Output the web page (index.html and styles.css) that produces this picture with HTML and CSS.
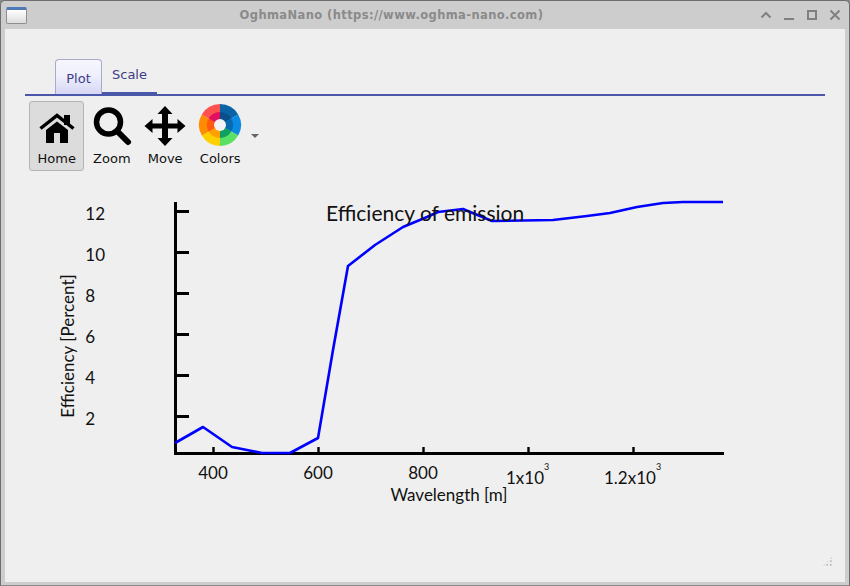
FILE: index.html
```html
<!DOCTYPE html>
<html lang="en">
<head>
<meta charset="utf-8">
<title>OghmaNano</title>
<link rel="stylesheet" href="styles.css">
</head>
<body>
<div class="window">
  <header class="titlebar">
    <div class="app-icon"></div>
    <div class="title">OghmaNano (https://www.oghma-nano.com)</div>
    <div class="win-buttons">
      <svg class="win-btn" viewBox="0 0 12 12"><path d="M1.5 8.5 6 4l4.500 4.500" /></svg>
      <svg class="win-btn" viewBox="0 0 12 12"><path d="M1 10h10" /></svg>
      <svg class="win-btn" viewBox="0 0 12 12"><path d="M2 2h8v8H2z" /></svg>
      <svg class="win-btn" viewBox="0 0 12 12"><path d="m1.500 1.500 9 9m0-9-9 9" /></svg>
    </div>
  </header>
  <main class="content">
    <nav class="tabs">
      <div class="tab tab-active">Plot</div>
      <div class="tab tab-idle">Scale</div>
    </nav>
    <div class="toolbar">
      <div class="tool tool-active">
        <svg class="tool-icon" viewBox="0 0 48 48">
          <path d="M31 12h6v10h-6z"/>
          <path d="M7.500 25.500 24 12.500l16.500 13" class="roof"/>
          <path d="M13 27 24 18.500 35 27v13H27V30h-6v10h-8z"/>
        </svg>
        <span>Home</span>
      </div>
      <div class="tool">
        <svg class="tool-icon" viewBox="0 0 48 48">
          <circle cx="20.500" cy="19" r="12" class="lens"/>
          <path d="m29 28 11 11" class="handle"/>
        </svg>
        <span>Zoom</span>
      </div>
      <div class="tool">
        <svg class="tool-icon" viewBox="0 0 48 48">
          <path d="M24 3l7.500 8H27v9.500h9.500V16l8 7-8 7v-4.500H27V35h4.500L24 43l-7.500-8H21v-9.500h-9.500V30l-8-7 8-7v4.500H21V11h-4.500z"/>
        </svg>
        <span>Move</span>
      </div>
      <div class="tool">
        <svg class="tool-icon" viewBox="0 0 48 48">
          <path fill="#0a63a5" d="M24 1a21 21 0 0 1 18.190 10.500L24 22z"/>
          <path fill="#0a8ae0" d="M42.190 11.500a21 21 0 0 1 0 21L24 22z"/>
          <path fill="#5be066" d="M42.190 32.500A21 21 0 0 1 24 43V22z"/>
          <path fill="#ffd000" d="M24 43a21 21 0 0 1-18.190-10.500L24 22z"/>
          <path fill="#ff8c00" d="M5.810 32.500a21 21 0 0 1 0-21L24 22z"/>
          <path fill="#ff5050" d="M5.810 11.500A21 21 0 0 1 24 1v21z"/>
          <path fill="#0a4f8a" d="M24 9a13 13 0 0 1 11.260 6.500L24 22z"/>
          <path fill="#0a6ab0" d="M35.260 15.500a13 13 0 0 1 0 13L24 22z"/>
          <path fill="#10a060" d="M35.260 28.500A13 13 0 0 1 24 35V22z"/>
          <path fill="#ffa000" d="M24 35a13 13 0 0 1-11.260-6.500L24 22z"/>
          <path fill="#ff5a10" d="M12.740 28.500a13 13 0 0 1 0-13L24 22z"/>
          <path fill="#e01060" d="M12.740 15.500A13 13 0 0 1 24 9v13z"/>
          <circle cx="24" cy="22" r="6" fill="#f4f4f4"/>
        </svg>
        <span>Colors</span>
      </div>
      <div class="caret"></div>
    </div>
    <svg class="plot" viewBox="5 172 840 400">
      <path class="axis" d="M175.500 202v253M174 453.500h550"/>
      <path class="axis" d="M175 211.500h14M175 252.500h14M175 293.500h14M175 334.500h14M175 375.500h14M175 416.500h14"/>
      <path class="xtick" d="M213.500 447v6M318.500 447v6M423.500 447v6M528.500 447v6M633.500 447v6"/>
      <path class="curve" d="M175 443 203 427 232 447 247 450 262 453 290 453 318 438 333 350 348 266 375 245 403 227 427 217 438 212 463 209 492 221 553 220 587 216 610 213 637 207 663 203 683 202 723 202"/>
      <text class="t-title" x="326" y="221">Efficiency of emission</text>
      <text class="t-tick" x="105" y="220" text-anchor="end">12</text>
      <text class="t-tick" x="105" y="261" text-anchor="end">10</text>
      <text class="t-tick" x="95" y="302" text-anchor="end">8</text>
      <text class="t-tick" x="95" y="343" text-anchor="end">6</text>
      <text class="t-tick" x="95" y="384" text-anchor="end">4</text>
      <text class="t-tick" x="95" y="425" text-anchor="end">2</text>
      <text class="t-tick" x="213" y="479" text-anchor="middle">400</text>
      <text class="t-tick" x="318" y="479" text-anchor="middle">600</text>
      <text class="t-tick" x="423" y="479" text-anchor="middle">800</text>
      <text class="t-tick" x="506" y="483.500">1x10</text>
      <text class="t-sup" x="544" y="469.500">3</text>
      <text class="t-tick" x="604" y="483.500">1.2x10</text>
      <text class="t-sup" x="656" y="469.500">3</text>
      <text class="t-label" x="449" y="501" text-anchor="middle">Wavelength [m]</text>
      <text class="t-label" transform="translate(74 346) rotate(-90)" text-anchor="middle">Efficiency [Percent]</text>
    </svg>
    <div class="grip"></div>
  </main>
</div>
</body>
</html>
```
FILE: styles.css
```css
html, body {
  margin: 0;
  padding: 0;
  width: 850px;
  height: 586px;
  overflow: hidden;
  background: #8a8a8a;
}
.window {
  box-sizing: border-box;
  width: 850px;
  height: 586px;
  display: flex;
  flex-direction: column;
  background: #cdcdcd;
  border: 1px solid #6e6e6e;
  border-bottom-color: #8a8a8a;
  border-radius: 5px 5px 0 0;
  padding: 0 4px 3px 4px;
  font-family: "DejaVu Sans", sans-serif;
}
.titlebar {
  height: 28px;
  flex: none;
  display: flex;
  align-items: center;
}
.app-icon {
  box-sizing: border-box;
  width: 21px;
  height: 17px;
  margin-left: 1px;
  border: 1px solid #8f8f8f;
  border-top: 3px solid #4e78b8;
  border-radius: 2px;
  background: linear-gradient(#ffffff, #dcdcdc);
}
.title {
  flex: 1;
  text-align: center;
  padding-right: 4px;
  font-size: 11.500px;
  font-weight: bold;
  letter-spacing: 0.4px;
  color: #8a8a8a;
}
.win-buttons {
  display: flex;
  gap: 11px;
  margin-right: 4px;
}
.win-btn {
  width: 12px;
  height: 12px;
  fill: none;
  stroke: #808080;
  stroke-width: 2;
}
.content {
  position: relative;
  flex: 1;
  display: flex;
  flex-direction: column;
  background: #efefef;
  min-height: 0;
}
.tabs {
  flex: none;
  margin: 30px 20px 0;
  height: 37px;
  box-sizing: border-box;
  display: flex;
  align-items: flex-end;
  padding-left: 30px;
  border-bottom: 2px solid #4b57a8;
}
.tab {
  box-sizing: border-box;
  font-size: 13px;
  color: #3d3d85;
}
.tab-active {
  width: 47px;
  height: 35px;
  padding-top: 11px;
  text-align: center;
  border: 1px solid #a9a9c9;
  border-bottom: none;
  border-radius: 4px 4px 0 0;
  background: linear-gradient(#f6f6fe 0%, #f0f0fc 45%, #d6d6f6 100%);
}
.tab-active + .tab-idle {
  width: 55px;
  height: 35px;
  padding: 8px 0 0 10px;
  border-bottom: 2px solid #4b57a8;
}
.toolbar {
  flex: none;
  display: flex;
  align-items: flex-start;
  gap: 0.2px;
  margin: 5px 0 0 24px;
  height: 71px;
}
.tool {
  box-sizing: border-box;
  height: 70px;
  display: flex;
  flex-direction: column;
  align-items: center;
  padding: 1px 7.500px 0;
  border: 1px solid transparent;
  border-radius: 3px;
  font-size: 13px;
  color: #111;
  line-height: 15px;
}
.tool-active {
  background: #dcdcdc;
  border-color: #b4b4b4;
}
.tool-icon {
  width: 48px;
  height: 48px;
  margin: 0 -20px 0;
  fill: #000;
  flex: none;
}
.roof {
  fill: none;
  stroke: #000;
  stroke-width: 3.500;
}
.lens {
  fill: none;
  stroke: #000;
  stroke-width: 5.500;
}
.handle {
  fill: none;
  stroke: #000;
  stroke-width: 6;
  stroke-linecap: round;
}
.caret {
  width: 0;
  height: 0;
  margin: 33px 0 0 2px;
  border-left: 4px solid transparent;
  border-right: 4px solid transparent;
  border-top: 4px solid #666;
}
.plot {
  display: block;
  width: 840px;
  height: 400px;
  flex: none;
}
.axis {
  fill: none;
  stroke: #000;
  stroke-width: 3;
}
.xtick {
  fill: none;
  stroke: #000;
  stroke-width: 2.400;
}
.curve {
  fill: none;
  stroke: #0000ff;
  stroke-width: 2.600;
  stroke-linejoin: round;
}
.t-title {
  font-family: Lato, sans-serif;
  font-size: 21px;
  fill: #111;
}
.t-tick {
  font-family: Lato, sans-serif;
  font-size: 17px;
  fill: #111;
}
.t-sup {
  font-family: Lato, sans-serif;
  font-size: 9px;
  fill: #111;
}
.t-label {
  font-family: Lato, sans-serif;
  font-size: 17px;
  fill: #111;
}
.grip {
  position: absolute;
  right: 12px;
  bottom: 15px;
  width: 11px;
  height: 11px;
  background-image: radial-gradient(circle, #b8b8b8 0.8px, transparent 1px);
  background-size: 3.500px 3.500px;
  clip-path: polygon(100% 0, 100% 100%, 0 100%);
}
```
